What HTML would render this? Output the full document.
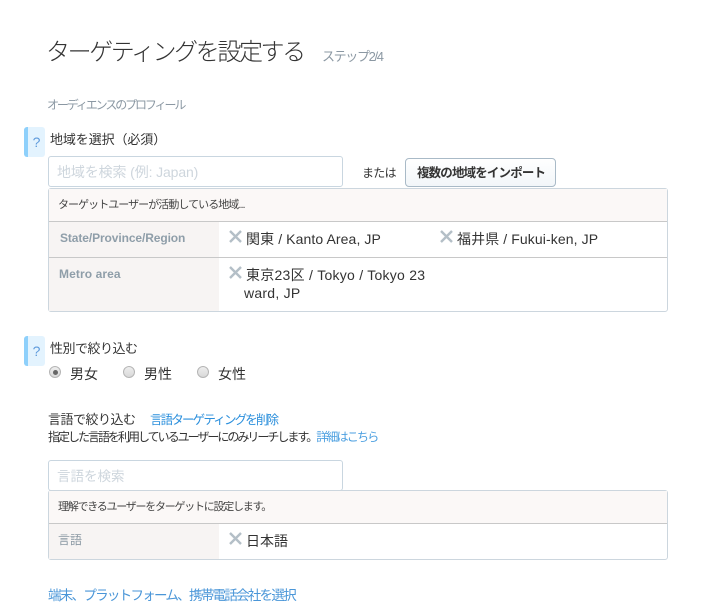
<!DOCTYPE html>
<html lang="ja">
<head>
<meta charset="utf-8">
<style>
html,body{margin:0;padding:0;background:#fff;}
body{width:714px;height:616px;position:relative;overflow:hidden;font-family:"Liberation Sans","Noto Sans CJK JP",sans-serif;color:#333;}
.t{position:absolute;white-space:nowrap;line-height:20px;}
.b{position:absolute;box-sizing:border-box;}
a{color:#2b8fdc;text-decoration:none;}
.q{position:absolute;left:24px;width:21px;height:30px;box-sizing:border-box;background:#e3f3fe;border-left:4px solid #8ed0fb;border-radius:3px;color:#5f9bdc;font-size:14px;line-height:30px;text-align:center;padding-right:0;}
.inp{position:absolute;box-sizing:border-box;background:#fff;border:1px solid #c9d6e0;border-radius:3px;}
.x{position:absolute;width:13px;height:13px;}
.r{position:absolute;width:12px;height:12px;box-sizing:border-box;border-radius:50%;border:1px solid #b5b5b5;background:linear-gradient(#eee,#d8d8d8);}
.r i{position:absolute;left:2.5px;top:2.5px;width:5px;height:5px;border-radius:50%;background:#666;}
</style>
</head>
<body>
<div class="t" style="left:46px;top:38px;font-size:24px;line-height:30px;letter-spacing:-2.4px;color:#333;font-weight:300;">ターゲティングを設定する</div>
<div class="t" style="left:322px;top:47px;font-size:13px;letter-spacing:-1.35px;color:#8b98a3;">ステップ2/4</div>
<div class="t" style="left:47px;top:95px;font-size:12px;letter-spacing:-2.1px;color:#8b98a3;">オーディエンスのプロフィール</div>

<div class="q" style="top:127px;">?</div>
<div class="t" style="left:50px;top:130px;font-size:13px;letter-spacing:-0.1px;">地域を選択（必須）</div>

<div class="inp" style="left:48px;top:156px;width:295px;height:31px;"></div>
<div class="t" style="left:57px;top:162px;font-size:14px;letter-spacing:-0.12px;color:#ced6dd;">地域を検索 (例: Japan)</div>
<div class="t" style="left:362px;top:163px;font-size:12px;letter-spacing:-0.7px;">または</div>
<div class="b" style="left:405px;top:158px;width:151px;height:29px;border:1px solid #a9bac7;border-radius:4px;background:linear-gradient(#fff,#f2f6f9);"></div>
<div class="t" style="left:417px;top:163px;font-size:12.5px;font-weight:bold;letter-spacing:-0.85px;color:#333;">複数の地域をインポート</div>

<div class="b" style="left:48px;top:188px;width:620px;height:124px;border:1px solid #ccd6de;border-radius:3px;background:#fff;">
  <div class="b" style="left:0;top:0;width:618px;height:33px;background:#fbf8f7;border-bottom:1px solid #c8c8c8;"></div>
  <div class="b" style="left:0;top:33px;width:170px;height:89px;background:#f7f4f3;"></div>
  <div class="b" style="left:0;top:68px;width:618px;height:1px;background:#c8c8c8;"></div>
</div>
<div class="t" style="left:58px;top:195px;font-size:11px;letter-spacing:-0.95px;color:#444;">ターゲットユーザーが活動している地域...</div>
<div class="t" style="left:60px;top:228px;font-size:12px;font-weight:bold;letter-spacing:-0.1px;color:#8f9ea9;">State/Province/Region</div>
<div class="t" style="left:59px;top:264px;font-size:12px;font-weight:bold;letter-spacing:0.1px;color:#8f9ea9;">Metro area</div>

<svg class="x" style="left:229px;top:230px;" viewBox="0 0 13 13"><path d="M1 1L12 12M12 1L1 12" stroke="#b4bfc7" stroke-width="2.4" fill="none"/></svg>
<div class="t" style="left:246px;top:229px;font-size:14px;letter-spacing:0.1px;">関東 / Kanto Area, JP</div>
<svg class="x" style="left:440px;top:230px;" viewBox="0 0 13 13"><path d="M1 1L12 12M12 1L1 12" stroke="#b4bfc7" stroke-width="2.4" fill="none"/></svg>
<div class="t" style="left:457px;top:229px;font-size:14px;letter-spacing:0.1px;">福井県 / Fukui-ken, JP</div>
<svg class="x" style="left:229px;top:266px;" viewBox="0 0 13 13"><path d="M1 1L12 12M12 1L1 12" stroke="#b4bfc7" stroke-width="2.4" fill="none"/></svg>
<div class="t" style="left:246px;top:265px;font-size:14px;letter-spacing:0.25px;">東京23区 / Tokyo / Tokyo 23</div>
<div class="t" style="left:244px;top:283px;font-size:14px;letter-spacing:0.25px;">ward, JP</div>

<div class="q" style="top:336px;">?</div>
<div class="t" style="left:50px;top:339px;font-size:13px;letter-spacing:-0.5px;">性別で絞り込む</div>
<div class="r" style="left:49px;top:366px;"><i></i></div>
<div class="t" style="left:70px;top:364px;font-size:14px;">男女</div>
<div class="r" style="left:123px;top:366px;"></div>
<div class="t" style="left:144px;top:364px;font-size:14px;">男性</div>
<div class="r" style="left:197px;top:366px;"></div>
<div class="t" style="left:218px;top:364px;font-size:14px;">女性</div>

<div class="t" style="left:48px;top:410px;font-size:13px;letter-spacing:-0.5px;">言語で絞り込む</div>
<div class="t" style="left:150px;top:410px;font-size:12.5px;letter-spacing:-1.83px;"><a>言語ターゲティングを削除</a></div>
<div class="t" style="left:48px;top:427px;font-size:12px;letter-spacing:-2.0px;color:#333;">指定した言語を利用しているユーザーにのみリーチします。<a style="color:#4b9fe0;letter-spacing:-1.8px;">詳細はこちら</a></div>

<div class="inp" style="left:48px;top:460px;width:295px;height:31px;"></div>
<div class="t" style="left:57px;top:467px;font-size:13.5px;color:#ced6dd;">言語を検索</div>

<div class="b" style="left:48px;top:490px;width:620px;height:70px;border:1px solid #ccd6de;border-radius:3px;background:#fff;">
  <div class="b" style="left:0;top:0;width:618px;height:33px;background:#fbf8f7;border-bottom:1px solid #c8c8c8;"></div>
  <div class="b" style="left:0;top:33px;width:170px;height:35px;background:#f7f4f3;"></div>
</div>
<div class="t" style="left:58px;top:497px;font-size:11px;letter-spacing:-1.25px;color:#444;">理解できるユーザーをターゲットに設定します。</div>
<div class="t" style="left:58px;top:530px;font-size:12px;color:#8a98a3;">言語</div>
<svg class="x" style="left:229px;top:532px;" viewBox="0 0 13 13"><path d="M1 1L12 12M12 1L1 12" stroke="#b4bfc7" stroke-width="2.4" fill="none"/></svg>
<div class="t" style="left:246px;top:531px;font-size:14px;">日本語</div>

<div class="t" style="left:48px;top:586px;font-size:13.5px;letter-spacing:-1.72px;"><a style="color:#4a96d8;">端末、プラットフォーム、携帯電話会社を選択</a></div>
</body>
</html>
